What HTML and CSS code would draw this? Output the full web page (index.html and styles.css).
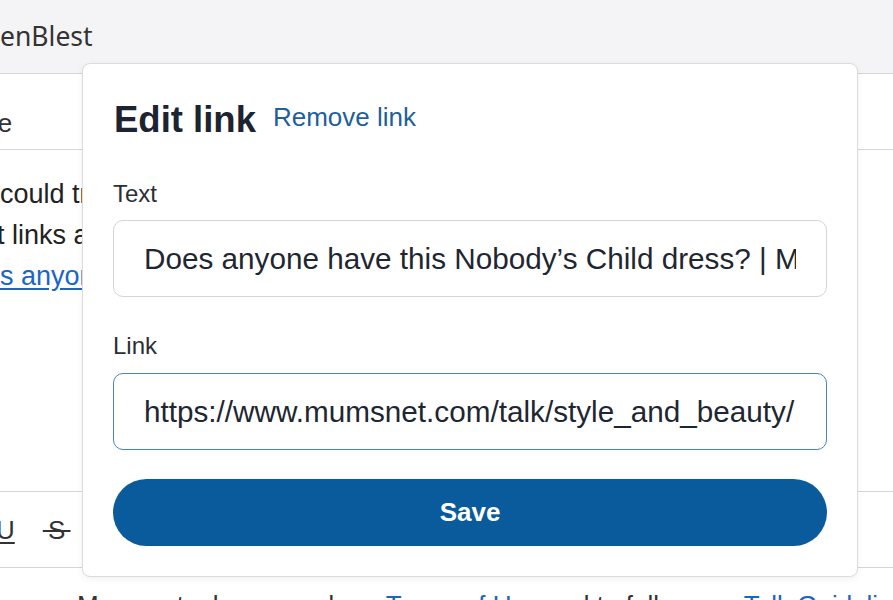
FILE: index.html
```html
<!DOCTYPE html>
<html lang="en">
<head>
<meta charset="utf-8">
<title>Edit link</title>
<link rel="stylesheet" href="styles.css">
</head>
<body>
<div class="page">
  <header class="topbar"><span class="user">enBlest</span></header>
  <section class="editor">
    <div class="tabs"><span class="tab">Write</span></div>
    <div class="content">
      <p class="line l1">could try posting the</p>
      <p class="line l2">t links and</p>
      <p class="line l3"><a href="#">s anyone have</a></p>
    </div>
    <div class="toolbar">
      <span class="tool tool-u">U</span>
      <span class="tool tool-s">&#8201;S&#8201;</span>
    </div>
  </section>
  <p class="footer">Mumsnet: please read our <a href="#">Terms of Use</a> and to follow our <a href="#">Talk Guidelines</a></p>

  <div class="modal">
    <div class="modal-head">
      <h2 class="modal-title">Edit link</h2>
      <a class="remove" href="#">Remove link</a>
    </div>
    <label class="label label-first" for="t">Text</label>
    <input id="t" class="field" type="text" value="Does anyone have this Nobody’s Child dress? | Mumsnet">
    <label class="label" for="l">Link</label>
    <input id="l" class="field field-focus" type="text" value="https://www.mumsnet.com/talk/style_and_beauty/">
    <button class="save" type="button">Save</button>
  </div>
</div>
</body>
</html>
```
FILE: styles.css
```css
html, body {
  margin: 0;
  padding: 0;
  background: #ffffff;
}
body {
  font-family: "Liberation Sans", Arial, sans-serif;
  color: #222;
  overflow: hidden;
}
.page {
  position: relative;
  width: 893px;
  height: 600px;
  overflow: hidden;
}
.topbar {
  height: 73px;
  box-sizing: border-box;
  background: #f4f4f6;
  padding-top: 18px;
}
.user {
  font-family: "Noto Sans", "Open Sans", sans-serif;
  font-size: 26.5px;
  color: #333;
  line-height: 1.362;
  display: block;
}
.editor {
  border-top: 1px solid #d6d6da;
}
.tabs {
  height: 76px;
  border-bottom: 1px solid #d6d6da;
  box-sizing: border-box;
  padding-top: 34px;
}
.tab {
  display: block;
  font-size: 26px;
  line-height: 30px;
  color: #333;
  text-indent: -48px;
  white-space: nowrap;
}
.content {
  height: 341px;
  box-sizing: border-box;
  padding-top: 24px;
}
.line {
  margin: 0;
  font-size: 27px;
  line-height: 41px;
  white-space: nowrap;
  color: #222;
}
.l2 { text-indent: -3px; }
.line a {
  color: #1a66c4;
  text-decoration: underline;
  text-underline-offset: 3px;
}
.toolbar {
  height: 77px;
  box-sizing: border-box;
  border-top: 1px solid #d6d6da;
  border-bottom: 1px solid #d6d6da;
  display: flex;
  align-items: center;
  gap: 28px;
}
.tool {
  font-size: 26px;
  line-height: 30px;
  color: #333;
}
.tool-u {
  margin-left: -4px;
  text-decoration: underline;
  text-decoration-thickness: 2px;
  text-underline-offset: 3px;
}
.tool-s {
  text-decoration: line-through;
  text-decoration-thickness: 2px;
}
.footer {
  margin: 22px 0 0 77px;
  font-size: 26px;
  line-height: 30px;
  white-space: nowrap;
  color: #333;
}
.footer a {
  color: #1a66c4;
  text-decoration: none;
}

/* Modal dialog overlay */
.modal {
  position: absolute;
  left: 82px;
  top: 63px;
  width: 776px;
  box-sizing: border-box;
  background: #fff;
  border: 1px solid #dcdcde;
  border-radius: 8px;
  box-shadow: 0 2px 6px rgba(0, 0, 0, 0.06);
  padding: 34px 30px 30px;
  display: flex;
  flex-direction: column;
}
.modal-head {
  display: flex;
  align-items: flex-start;
  gap: 17px;
}
.modal-title {
  margin: 0 0 0 1px;
  font-size: 36.5px;
  line-height: 43px;
  font-weight: 700;
  color: #1b2430;
}
.remove {
  margin-top: 4px;
  font-size: 26px;
  line-height: 31px;
  color: #1f5f9b;
  text-decoration: none;
}
.label {
  display: block;
  font-size: 24px;
  line-height: 29px;
  color: #2a2f36;
  margin-top: 34px;
  margin-bottom: 13px;
}
.label-first {
  margin-top: 38px;
  margin-bottom: 12px;
}
.field {
  display: block;
  width: 100%;
  height: 77px;
  box-sizing: border-box;
  border: 1px solid #d4d4d6;
  border-radius: 10px;
  padding: 0 30px;
  margin: 0;
  font-family: "Liberation Sans", Arial, sans-serif;
  font-size: 29.7px;
  color: #1e2731;
  background: #fff;
  outline: none;
}
.field-focus {
  border-color: #4a84b4;
}
.save {
  margin-top: 29px;
  height: 67px;
  width: 100%;
  border: none;
  border-radius: 34px;
  background: #0a5b9c;
  color: #fff;
  font-family: "Liberation Sans", Arial, sans-serif;
  font-size: 26px;
  font-weight: 700;
  cursor: pointer;
}
```
